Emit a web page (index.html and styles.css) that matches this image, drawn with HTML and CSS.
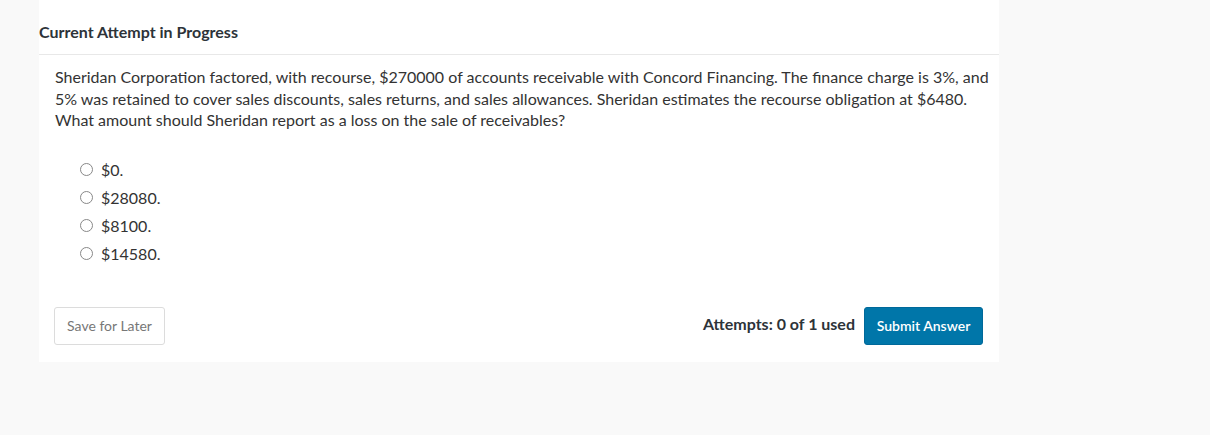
FILE: index.html
```html
<!DOCTYPE html>
<html>
<head>
<meta charset="utf-8">
<link rel="stylesheet" href="styles.css">
</head>
<body>
<div class="card">
  <h2 class="title">Current Attempt in Progress</h2>
  <div class="body">
    <p class="question">Sheridan Corporation factored, with recourse, $270000 of accounts receivable with Concord Financing. The finance charge is 3%, and 5% was retained to cover sales discounts, sales returns, and sales allowances. Sheridan estimates the recourse obligation at $6480. What amount should Sheridan report as a loss on the sale of receivables?</p>
    <ul class="options">
      <li><span class="radio"></span>$0.</li>
      <li><span class="radio"></span>$28080.</li>
      <li><span class="radio"></span>$8100.</li>
      <li><span class="radio"></span>$14580.</li>
    </ul>
    <div class="actions">
      <button class="btn-save">Save for Later</button>
      <div class="right">
        <span class="attempts">Attempts: 0 of 1 used</span>
        <button class="btn-submit">Submit Answer</button>
      </div>
    </div>
  </div>
</div>
</body>
</html>
```
FILE: styles.css
```css
html, body {
  margin: 0;
  padding: 0;
  background: #f9f9f9;
  font-family: Lato, "Liberation Sans", sans-serif;
  color: #333;
}
.card {
  margin-left: 39px;
  width: 960px;
  background: #fff;
  padding-bottom: 17px;
}
.title {
  margin: 0;
  font-size: 16px;
  font-weight: 700;
  line-height: 20px;
  padding: 22px 0 12px 0;
  border-bottom: 1px solid #e8e8e8;
  color: #2d3339;
}
.body {
  padding: 0 16px;
}
.question {
  margin: 11px -12px 0 0;
  font-size: 16px;
  line-height: 21.6px;
  color: #333;
}
.options {
  list-style: none;
  margin: 25px 0 0 0;
  padding: 0 0 0 25px;
}
.options li {
  display: flex;
  align-items: center;
  height: 28px;
  font-size: 16px;
  color: #333;
}
.radio {
  border: 1px solid #888;
  border-radius: 50%;
  margin-right: 8px;
  box-sizing: border-box;
  width: 13px;
  height: 13px;
}
.actions {
  display: flex;
  justify-content: space-between;
  align-items: center;
  margin-top: 39px;
}
.btn-save {
  height: 38px;
  width: 111px;
  margin-left: -1px;
  background: #fff;
  border: 1px solid #dcdcdc;
  border-radius: 3px;
  font-family: Lato, "Liberation Sans", sans-serif;
  font-size: 14px;
  color: #777;
}
.right {
  display: flex;
  align-items: center;
  gap: 9px;
}
.attempts {
  font-size: 16px;
  font-weight: 700;
  color: #2d3339;
  margin-top: -4px;
}
.btn-submit {
  height: 38px;
  width: 119px;
  background: #0076a9;
  border: 1px solid #00699a;
  border-radius: 3px;
  color: #fff;
  font-family: Lato, "Liberation Sans", sans-serif;
  font-size: 14px;
  font-weight: 600;
}
```
